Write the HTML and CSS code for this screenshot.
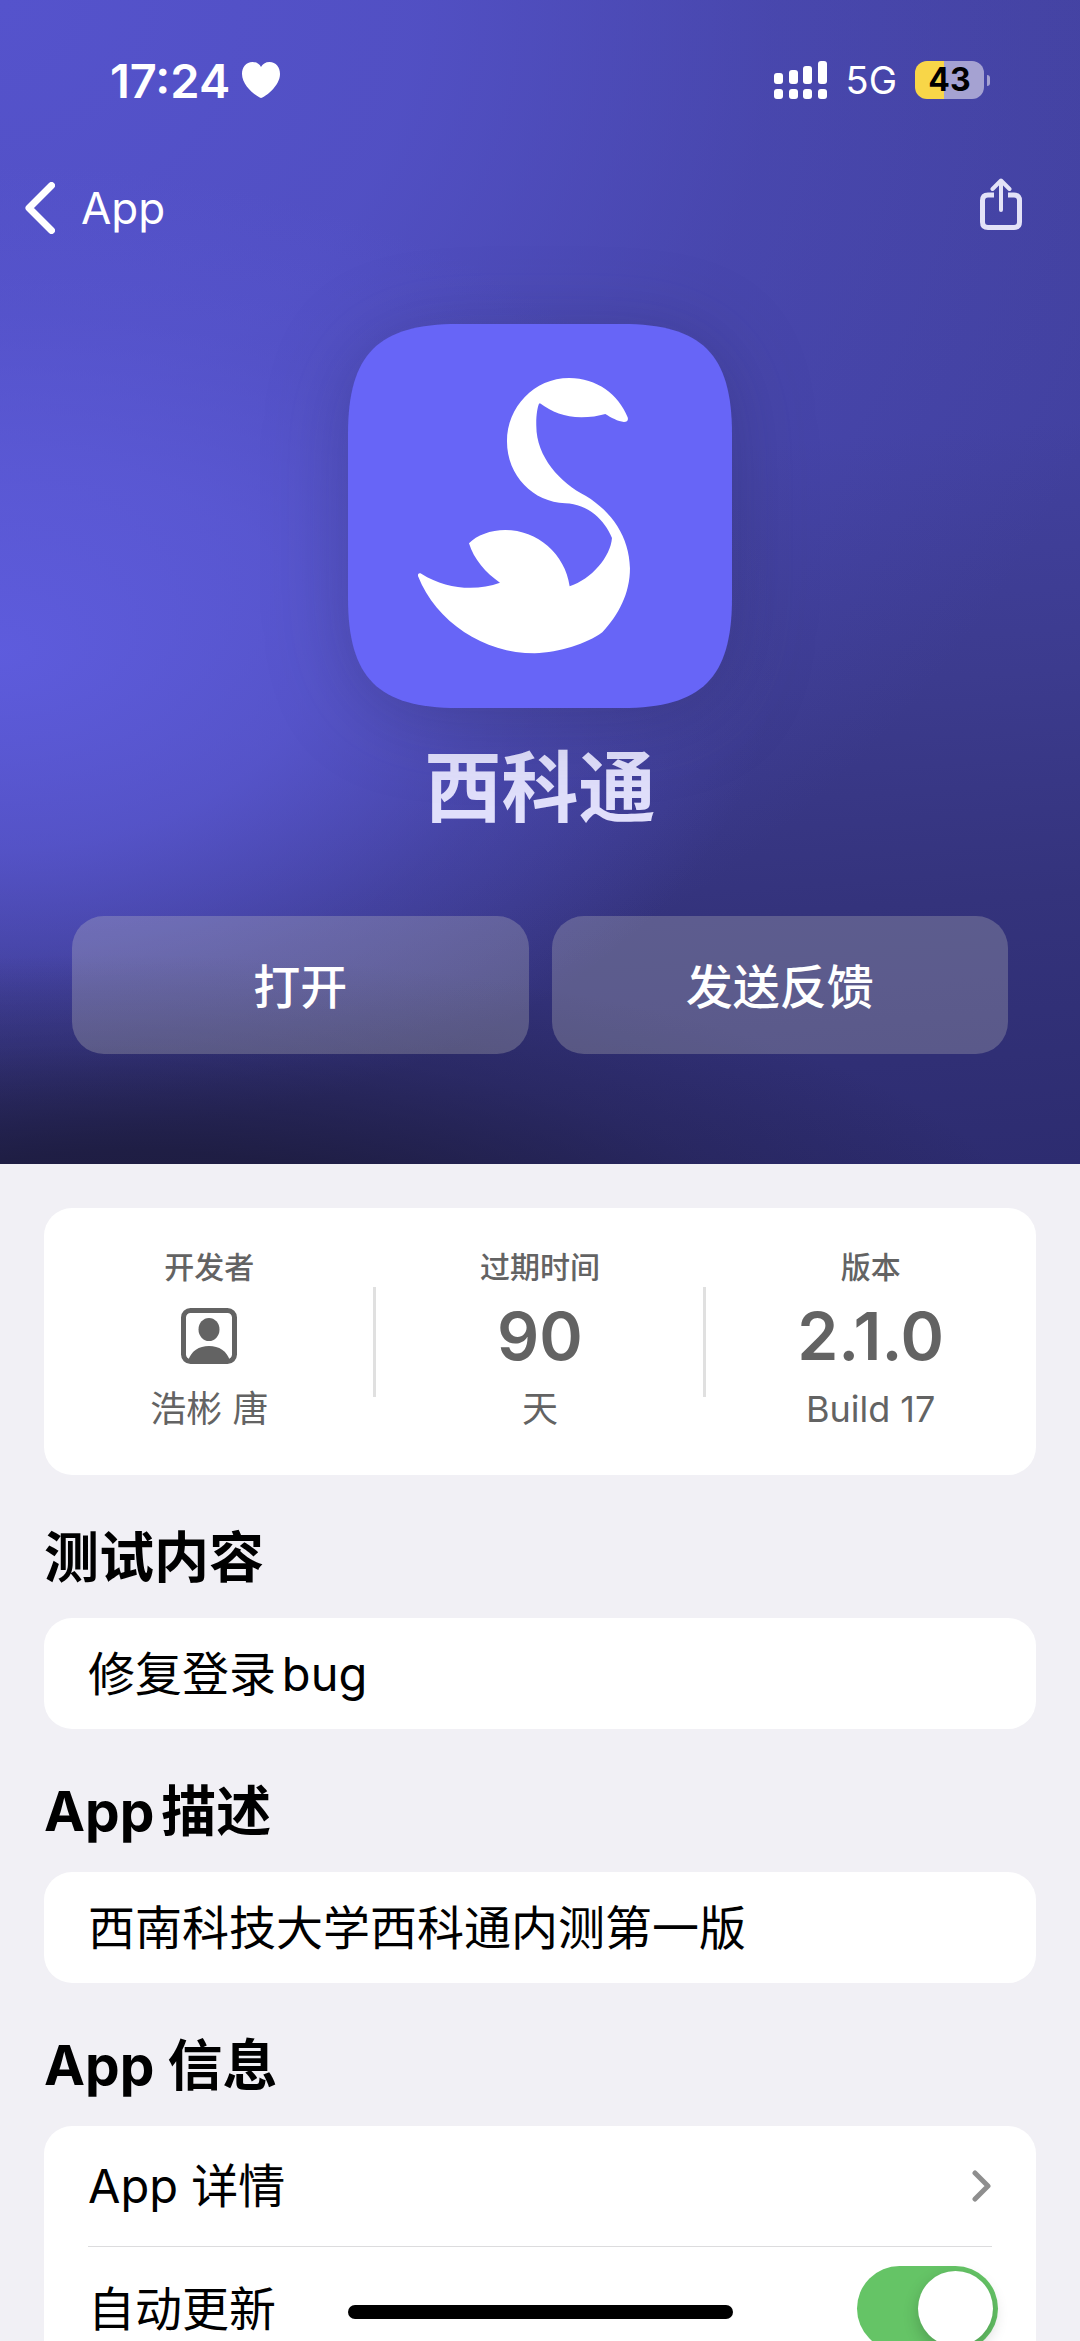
FILE: index.html
```html
<!DOCTYPE html>
<html lang="zh-CN">
<head>
<meta charset="utf-8">
<meta name="viewport" content="width=device-width, initial-scale=1">
<title>西科通</title>
<link rel="stylesheet" href="styles.css">
</head>
<body>
<div class="app">
  <header class="hero">
    <div class="status">
      <div class="status-left">
        <span class="time">17:24</span>
        <svg class="heart" viewBox="0 0 38 36" aria-hidden="true"><path d="M19 36C15 35 0 24 0 12 0 5 4 0 10.500 0 14.500 0 17.500 2 19 5 20.500 2 23.500 0 27.500 0 34 0 38 5 38 12 38 24 23 35 19 36Z" fill="#fff"/></svg>
      </div>
      <div class="status-right">
        <svg class="signal" viewBox="0 0 54 38" aria-hidden="true" fill="#fff"><rect x="0" y="12" width="9" height="11" rx="3"/><rect x="15" y="9" width="9" height="14" rx="3"/><rect x="29" y="5" width="9" height="18" rx="3"/><rect x="44" y="0" width="9" height="23" rx="3"/><rect x="0" y="28" width="9" height="10" rx="3"/><rect x="15" y="28" width="9" height="10" rx="3"/><rect x="29" y="28" width="9" height="10" rx="3"/><rect x="44" y="28" width="9" height="10" rx="3"/></svg>
        <span class="network">5G</span>
        <span class="battery"><span class="battery-level">43</span></span>
      </div>
    </div>
    <nav class="nav">
      <a class="back" href="#"><svg class="back-icon" viewBox="0 0 30 52" aria-hidden="true"><path d="M26.500 3.500 4 26 26.500 48.500" fill="none" stroke="#fff" stroke-width="7" stroke-linecap="round" stroke-linejoin="round"/></svg>App</a>
      <button class="share" type="button" aria-label="分享"><svg class="share-icon" viewBox="0 0 42 52" aria-hidden="true"><path d="M14 17H8Q2.500 17 2.500 22.500V44Q2.500 49.500 8 49.500H34Q39.500 49.500 39.500 44V22.500Q39.500 17 34 17H28" fill="none" stroke="#e3e2f7" stroke-width="5"/><path d="M21 32V3M12.500 11 21 2.500 29.500 11" fill="none" stroke="#e3e2f7" stroke-width="4" stroke-linecap="round" stroke-linejoin="round"/></svg></button>
    </nav>
    <svg class="app-icon" viewBox="0 0 384 384" aria-hidden="true">
      <path d="M0 110C0 30 30 0 110 0H274C354 0 384 30 384 110V274C384 354 354 384 274 384H110C30 384 0 354 0 274Z" fill="#6765f7"/>
      <path transform="translate(-18 -24) scale(.3333)" d="M630 310C665 336 704 352 754 352 780 352 806 348 826 342 843 353 864 364 882 366 891 366 896 361 893 352 866 283 800 234 718 234 612 234 531 322 531 424 531 528 610 607 706 610 774 612 824 660 846 714 842 770 784 838 719 859 706 762 622 690 526 690 482 690 440 706 417 730 431 777 468 820 510 848 440 874 350 869 274 821 267 818 263 821 264 828 318 966 462 1060 614 1060 690 1057 769 1032 817 997 866 945 900 880 900 805 898 710 846 636 768 588 690 548 619 470 619 378 618 350 622 322 627 311Z" fill="#fff"/>
    </svg>
    <h1 class="title">西科通</h1>
    <div class="actions">
      <button class="action" type="button">打开</button>
      <button class="action" type="button">发送反馈</button>
    </div>
  </header>

  <main class="content">
    <section class="card stats">
      <div class="stat">
        <span class="stat-label">开发者</span>
        <span class="stat-value"><svg class="person" viewBox="0 0 56 56" aria-hidden="true"><rect x="2.500" y="2.500" width="51" height="51" rx="7" fill="none" stroke="#636363" stroke-width="5"/><ellipse cx="28" cy="21.500" rx="10.500" ry="11.500" fill="#636363"/><path d="M7 53C10 43 18 38 28 38S46 43 49 53Z" fill="#636363"/></svg></span>
        <span class="stat-note">浩彬 唐</span>
      </div>
      <div class="stat">
        <span class="stat-label">过期时间</span>
        <span class="stat-value">90</span>
        <span class="stat-note">天</span>
      </div>
      <div class="stat">
        <span class="stat-label">版本</span>
        <span class="stat-value">2.1.0</span>
        <span class="stat-note">Build 17</span>
      </div>
    </section>

    <section>
      <h2 class="heading">测试内容</h2>
      <p class="card text">修复登录bug</p>
    </section>

    <section>
      <h2 class="heading">App描述</h2>
      <p class="card text">西南科技大学西科通内测第一版</p>
    </section>

    <section>
      <h2 class="heading">App 信息</h2>
      <div class="card list">
        <a class="row" href="#">App 详情<svg class="chevron" viewBox="0 0 20 32" aria-hidden="true"><path d="M3 3 16 16 3 29" fill="none" stroke="#8e8e8e" stroke-width="5" stroke-linecap="round" stroke-linejoin="round"/></svg></a>
        <label class="row">自动更新<input class="switch" type="checkbox" role="switch" checked></label>
      </div>
    </section>
  </main>
  <div class="home-indicator"></div>
</div>
</body>
</html>
```
FILE: styles.css
```css
* {
  box-sizing: border-box;
}

body {
  margin: 0;
  background: #f1f0f5;
  color: #000;
  font-family: Inter, "Noto Sans CJK SC", sans-serif;
  font-size: 47px;
  text-autospace: normal;
}

button {
  border: 0;
  padding: 0;
  background: none;
  font: inherit;
}

a {
  color: inherit;
  text-decoration: none;
}

svg {
  display: block;
}

.app {
  height: 100vh;
  overflow: hidden auto;
  scrollbar-width: none;
}

.hero {
  display: flex;
  flex-direction: column;
  align-items: center;
  padding: 50px 0 110px;
  color: #fff;
  background:
    radial-gradient(ellipse 85% 26% at 12% 108%, #1c1b3c 0%, rgba(28, 27, 60, 0.85) 35%, rgba(28, 27, 60, 0.3) 70%, rgba(28, 27, 60, 0) 100%),
    radial-gradient(ellipse 72% 42% at 0% 56%, rgba(96, 94, 226, 0.9) 0%, rgba(94, 92, 220, 0.7) 40%, rgba(92, 90, 216, 0.3) 70%, rgba(92, 90, 216, 0) 100%),
    radial-gradient(ellipse 110% 95% at 0% 0%, #5553cc 0%, rgba(85, 83, 204, 0.8) 35%, rgba(85, 83, 204, 0.3) 65%, rgba(85, 83, 204, 0) 100%),
    linear-gradient(176deg, #4342a0 0%, #4241a0 40%, #3c3b8e 60%, #34337c 78%, #2d2c70 100%);
}

.status {
  display: flex;
  justify-content: space-between;
  align-items: center;
  width: 100%;
  height: 60px;
  padding: 0 90px 0 110px;
}

.status-left {
  display: flex;
  align-items: center;
  gap: 12px;
}

.time {
  font-size: 47px;
  font-weight: 600;
}

.heart {
  width: 38px;
  height: 36px;
}

.status-right {
  display: flex;
  align-items: center;
  gap: 18px;
}

.signal {
  width: 54px;
  height: 38px;
}

.network {
  font-size: 38px;
}

.battery {
  display: flex;
  align-items: center;
  gap: 3px;
}

.battery::after {
  content: "";
  width: 3px;
  height: 11px;
  border-radius: 0 3px 3px 0;
  background: #a5a2d2;
}

.battery-level {
  width: 69px;
  border-radius: 12px;
  background: linear-gradient(90deg, #f8d648 42%, #a5a2d2 42%);
  color: #000;
  font-size: 32px;
  font-weight: 700;
  line-height: 38px;
  text-align: center;
}

.nav {
  display: flex;
  justify-content: space-between;
  align-items: center;
  width: 100%;
  height: 100px;
  margin: 48px 0 66px;
  padding: 0 58px 0 25px;
}

.back {
  display: flex;
  align-items: center;
  gap: 26px;
  font-size: 44px;
}

.back-icon {
  width: 30px;
  height: 52px;
}

.share {
  padding-bottom: 8px;
}

.share-icon {
  width: 42px;
  height: 52px;
}

.app-icon {
  width: 384px;
  height: 384px;
  filter: drop-shadow(0 10px 40px rgba(30, 30, 60, 0.25));
}

.title {
  margin: 24px 0 72px;
  color: #e0dffb;
  font-size: 77px;
  font-weight: 700;
  line-height: 112px;
}

.actions {
  display: grid;
  grid-template-columns: 1fr 1fr;
  gap: 23px;
  width: 100%;
  padding: 0 72px;
}

.action {
  height: 138px;
  padding-bottom: 4px;
  border-radius: 32px;
  background: rgba(225, 225, 205, 0.24);
  color: #fff;
  font-size: 47px;
  font-weight: 500;
}

.content {
  padding: 44px 44px 80px;
}

.card {
  border-radius: 28px;
  background: #fff;
}

.stats {
  display: grid;
  grid-template-columns: repeat(3, 1fr);
  height: 267px;
  color: #636363;
}

.stat {
  position: relative;
  display: flex;
  flex-direction: column;
  align-items: center;
  padding-top: 39px;
}

.stat + .stat::before {
  content: "";
  position: absolute;
  top: 79px;
  left: -2px;
  width: 3px;
  height: 110px;
  background: #e0e0e0;
}

.stat-label {
  font-size: 30px;
  font-weight: 500;
  line-height: 40px;
}

.stat-value {
  display: flex;
  align-items: center;
  height: 97px;
  font-size: 66px;
  font-weight: 600;
}

.person {
  width: 56px;
  height: 56px;
}

.stat-note {
  font-size: 36px;
  line-height: 50px;
}

.heading {
  margin: 0;
  padding: 48px 0 26px;
  font-size: 55px;
  font-weight: 700;
  line-height: 69px;
}

.text {
  margin: 0;
  padding: 21px 44px;
  line-height: 69px;
}

.list {
  padding: 0 44px;
}

.row {
  display: flex;
  justify-content: space-between;
  align-items: center;
  height: 120px;
  line-height: 68px;
}

.row + .row {
  height: 124px;
  border-top: 1px solid #dcdcde;
}

.chevron {
  width: 20px;
  height: 32px;
}

.switch {
  appearance: none;
  display: flex;
  justify-content: flex-end;
  width: 141px;
  height: 85px;
  margin: 0 -6px 0 0;
  padding: 5px;
  border-radius: 43px;
  background: #65c466;
}

.switch::before {
  content: "";
  width: 75px;
  height: 75px;
  border-radius: 50%;
  background: #fff;
  box-shadow: 0 6px 16px rgba(0, 0, 0, 0.2);
}

.switch:not(:checked) {
  justify-content: flex-start;
  background: #e9e9eb;
}

.home-indicator {
  position: fixed;
  bottom: 22px;
  left: 50%;
  width: 385px;
  height: 14px;
  margin-left: -192px;
  border-radius: 7px;
  background: #000;
}
```
